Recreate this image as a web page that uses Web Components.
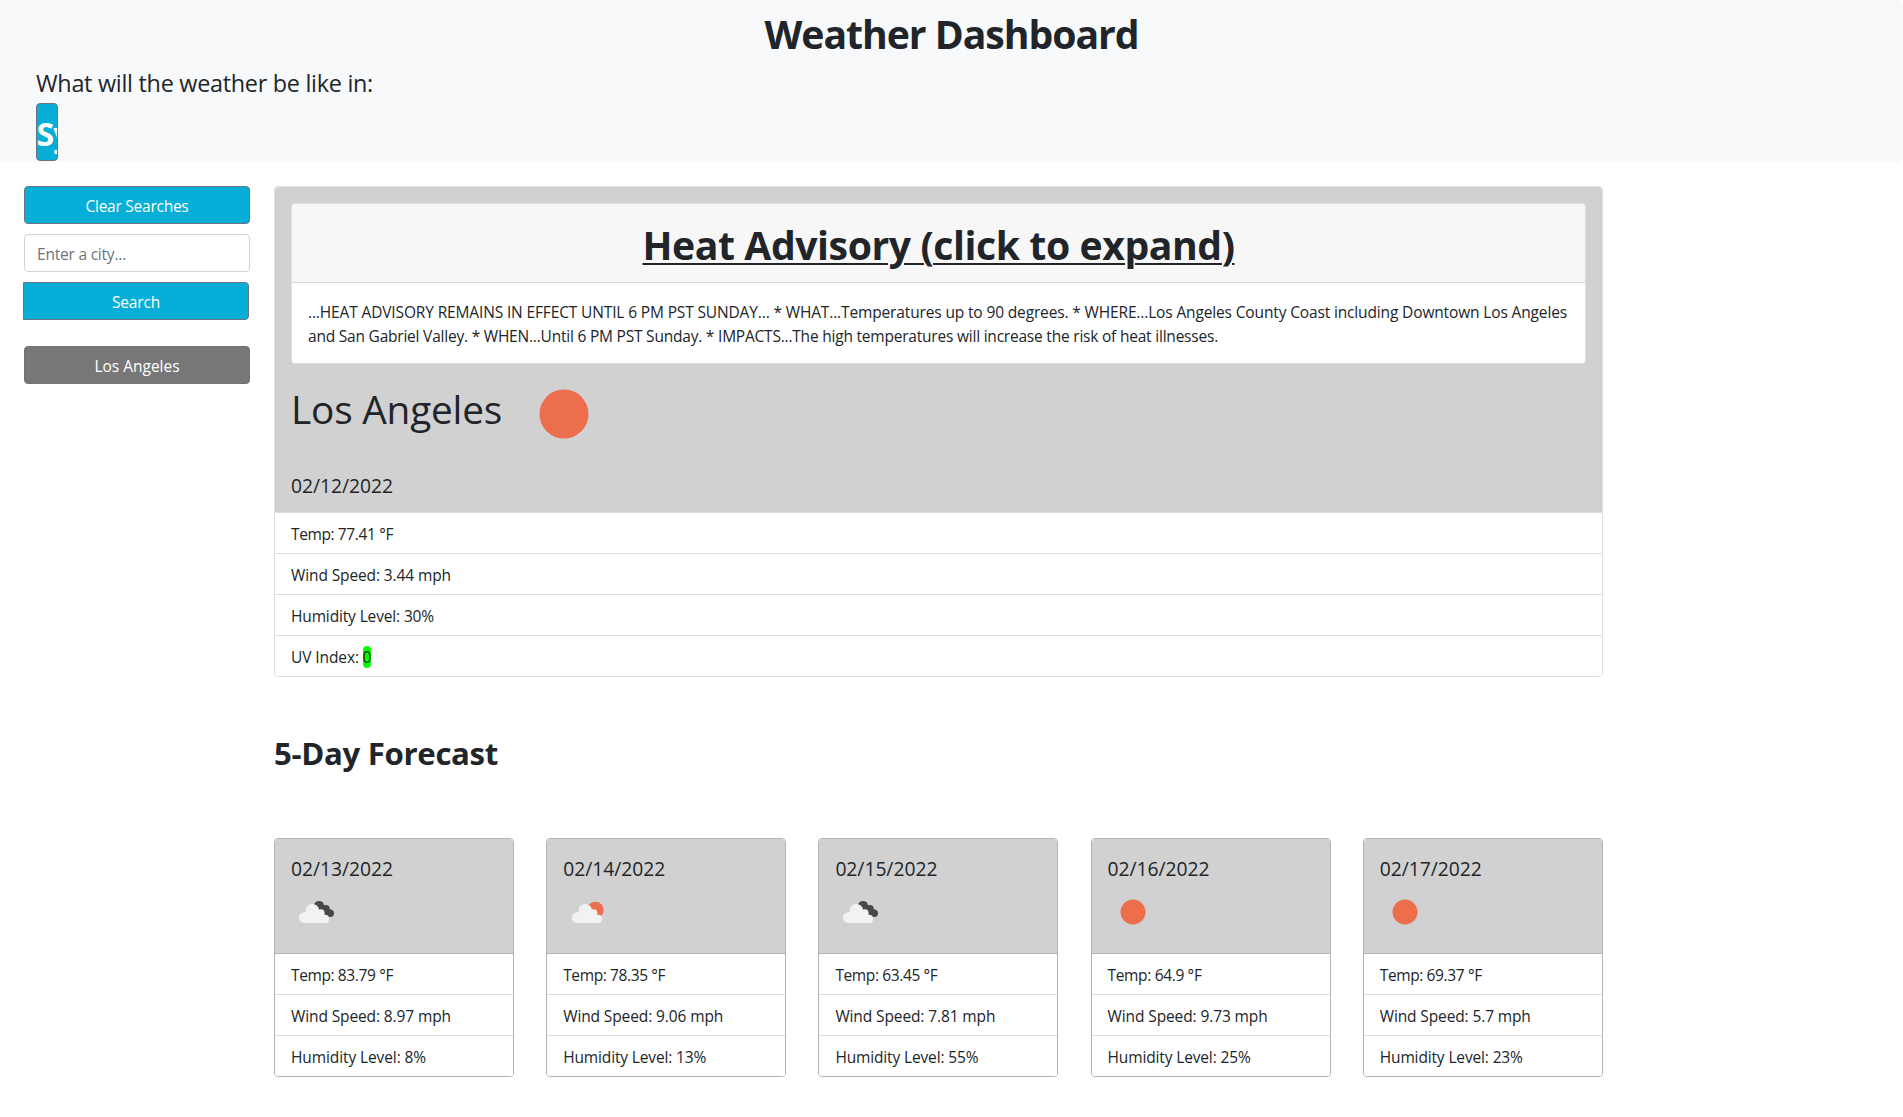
<!DOCTYPE html>
<html lang="en">
<head>
<meta charset="utf-8">
<title>Weather Dashboard</title>
<style>
body{margin:0;background:#fff;color:#212529;font:15.5px/24px "Open Sans","Noto Sans",sans-serif}
</style>
</head>
<body>
<weather-app></weather-app>
<script>
const define = (name, html, setup) => customElements.define(name, class extends HTMLElement {
  connectedCallback() {
    if (this.shadowRoot) return;
    this.attachShadow({ mode: 'open' }).innerHTML =
      '<style>*{box-sizing:border-box}</style>' + (typeof html === 'function' ? html(this) : html);
    if (setup) setup(this);
  }
});

/* Inline text tracked so that its line is `w` pixels wide */
define('fit-text', '<style>:host{display:inline-block;white-space:nowrap}</style><slot></slot>', el => {
  const w = +el.getAttribute('w');
  const n = el.textContent.length;
  const now = el.getBoundingClientRect().width;
  el.style.letterSpacing = ((w - now) / n).toFixed(4) + 'px';
});

define('weather-icon', el => {
  const kind = el.getAttribute('kind');
  const cloud = `<g fill="#f2f2f2"><circle cx="21.4" cy="23.6" r="6.7"/><circle cx="13.4" cy="30.6" r="5.4"/><circle cx="29.6" cy="26.2" r="4"/><circle cx="34.1" cy="31.9" r="4.1"/><path d="M13 25.5h19.5v10.5H13z"/></g>`;
  const art = {
    sun: '<circle cx="25" cy="25" r="12.5" fill="#ec6e4c"/>',
    clouds: `<g fill="#484848"><circle cx="28" cy="18.8" r="4.9"/><circle cx="35" cy="21.7" r="3.6"/><circle cx="39.2" cy="26.2" r="3.8"/><path d="M27 19l8-1 5 5-1 7-9-3z"/></g>${cloud}`,
    few: `<circle cx="32.4" cy="23" r="8.3" fill="#ec6e4c"/><g transform="translate(.8)">${cloud}</g>`
  }[kind];
  return `<style>:host{display:block;width:50px;height:50px;flex:none}svg{display:block;width:100%;height:100%}</style><svg viewBox="0 0 50 50">${art}</svg>`;
});

define('app-button', `<style>
:host{display:block}
button{display:block;width:100%;height:38px;margin:0;padding:1px 0 0;border:1px solid #6c757d;border-radius:var(--radius,4px);background:var(--fill,#07aed8);color:#fff;font:inherit;line-height:36px;text-align:center}
</style><button><slot></slot></button>`);

define('city-input', `<style>
:host{display:block;height:38px;box-sizing:border-box;border:1px solid #ced4da;border-radius:4px;padding:1px 12px 0;line-height:36px;color:#6c757d;background:#fff}
</style><slot></slot>`);

define('page-header', `<style>
:host{display:block;box-sizing:border-box;height:162px;background:#f8f9fb;border-radius:5px;padding-top:10px}
h1{margin:0;font-size:39.2px;line-height:48px;font-weight:700;text-align:center}
.q{margin:9px 0 0 36px;font-size:23.4px;line-height:32px}
.city{width:22px;height:58px;margin:4px 0 0 36px;border:1px solid #6c757d;border-radius:4px;background:#07aed8;color:#fff;font-weight:700;font-size:32px;line-height:60px;text-indent:-.5px;letter-spacing:-.8px;overflow:hidden;white-space:nowrap}
</style>
<h1><fit-text w="374">Weather Dashboard</fit-text></h1>
<div class="q"><fit-text w="337">What will the weather be like in:</fit-text></div>
<div class="city">Sy</div>`);

define('side-bar', `<style>
:host{display:flex;flex-direction:column;gap:10px;width:226px;flex:none}
.search{--radius:0 4px 4px 0;margin:0 1px 0 -1px}
.past{--fill:#777;margin-top:16px}
</style>
<app-button><fit-text w="103">Clear Searches</fit-text></app-button>
<city-input><fit-text w="89">Enter a city...</fit-text></city-input>
<app-button class="search"><fit-text w="48">Search</fit-text></app-button>
<app-button class="past"><fit-text w="85">Los Angeles</fit-text></app-button>`);

define('alert-card', `<style>
:host{display:block;box-sizing:border-box;height:161px;border:1px solid #dfdfdf;border-radius:4px;background:#fff;overflow:hidden}
h1{margin:0;height:79px;padding-top:17px;background:#f7f7f7;border-bottom:1px solid #d5d5d5;font-size:39.2px;line-height:48px;text-align:center}
fit-text{text-decoration:underline;text-decoration-thickness:2px;text-underline-offset:3px}
div{padding:17px 16px}
div fit-text{display:block;width:max-content;text-decoration:none}
</style>
<h1><fit-text w="592">Heat Advisory (click to expand)</fit-text></h1>
<div><fit-text w="1259">...HEAT ADVISORY REMAINS IN EFFECT UNTIL 6 PM PST SUNDAY... * WHAT...Temperatures up to 90 degrees. * WHERE...Los Angeles County Coast including Downtown Los Angeles</fit-text>
<fit-text w="910">and San Gabriel Valley. * WHEN...Until 6 PM PST Sunday. * IMPACTS...The high temperatures will increase the risk of heat illnesses.</fit-text></div>`);

define('stat-row', `<style>
:host{display:block;box-sizing:border-box;height:41px;border-top:1px solid var(--line,#dfdfdf);padding:9px 16px 0;background:#fff}
</style><slot></slot>`);

define('today-card', `<style>
:host{display:block;box-sizing:border-box;height:491px;border:1px solid #dfdfdf;border-radius:4px;overflow:hidden}
header{height:325px;padding:16px;background:#d1d1d1}
.now{display:flex;height:100px;font-size:38.8px;line-height:48px}
.now fit-text{margin-top:21px;height:48px}
weather-icon{width:98px;height:98px;margin:1px 0 0 12.5px}
.date{font-size:19.3px;line-height:24px;margin-top:10px}
.uv{background:#0f0;border-radius:4px;margin-left:-.5px}
</style>
<header>
<alert-card></alert-card>
<div class="now"><fit-text w="211">Los Angeles</fit-text><weather-icon kind="sun"></weather-icon></div>
<div class="date"><fit-text w="102">02/12/2022</fit-text></div>
</header>
<stat-row><fit-text w="102">Temp: 77.41 °F</fit-text></stat-row>
<stat-row><fit-text w="160">Wind Speed: 3.44 mph</fit-text></stat-row>
<stat-row><fit-text w="143">Humidity Level: 30%</fit-text></stat-row>
<stat-row><fit-text w="68">UV Index:</fit-text> <span class="uv">0</span></stat-row>`);

define('day-card', el => {
  const a = n => el.getAttribute(n);
  return `<style>
:host{display:block;box-sizing:border-box;width:240px;height:239px;border:1px solid #b3b3b3;border-radius:4px;overflow:hidden}
header{height:114px;padding:18px 16px 0;background:#d1d1d1}
.date{font-size:19.3px;line-height:24px;height:30px}
stat-row:first-of-type{--line:#b3b3b3}
</style>
<header><div class="date"><fit-text w="102">${a('date')}</fit-text></div><weather-icon kind="${a('kind')}"></weather-icon></header>
<stat-row><fit-text w="${a('tw')}">Temp: ${a('temp')} °F</fit-text></stat-row>
<stat-row><fit-text w="${a('ww')}">Wind Speed: ${a('wind')} mph</fit-text></stat-row>
<stat-row><fit-text w="${a('hw')}">Humidity Level: ${a('hum')}%</fit-text></stat-row>`;
});

define('weather-app', `<style>
:host{display:block;height:1117px}
main{display:flex;gap:24px;padding:24px 0 0 24px}
section{width:1329px}
h2{margin:57px 0 0;font-size:31.2px;line-height:38px;height:104px}
.days{display:flex;justify-content:space-between;width:1328.8px}
</style>
<page-header></page-header>
<main>
<side-bar></side-bar>
<section>
<today-card></today-card>
<h2><fit-text w="224">5-Day Forecast</fit-text></h2>
<div class="days">
<day-card date="02/13/2022" kind="clouds" temp="83.79" wind="8.97" hum="8" tw="102" ww="160" hw="135"></day-card>
<day-card date="02/14/2022" kind="few" temp="78.35" wind="9.06" hum="13" tw="102" ww="160" hw="143"></day-card>
<day-card date="02/15/2022" kind="clouds" temp="63.45" wind="7.81" hum="55" tw="102" ww="160" hw="143"></day-card>
<day-card date="02/16/2022" kind="sun" temp="64.9" wind="9.73" hum="25" tw="94" ww="160" hw="143"></day-card>
<day-card date="02/17/2022" kind="sun" temp="69.37" wind="5.7" hum="23" tw="102" ww="151" hw="143"></day-card>
</div>
</section>
</main>`);
</script>
</body>
</html>
